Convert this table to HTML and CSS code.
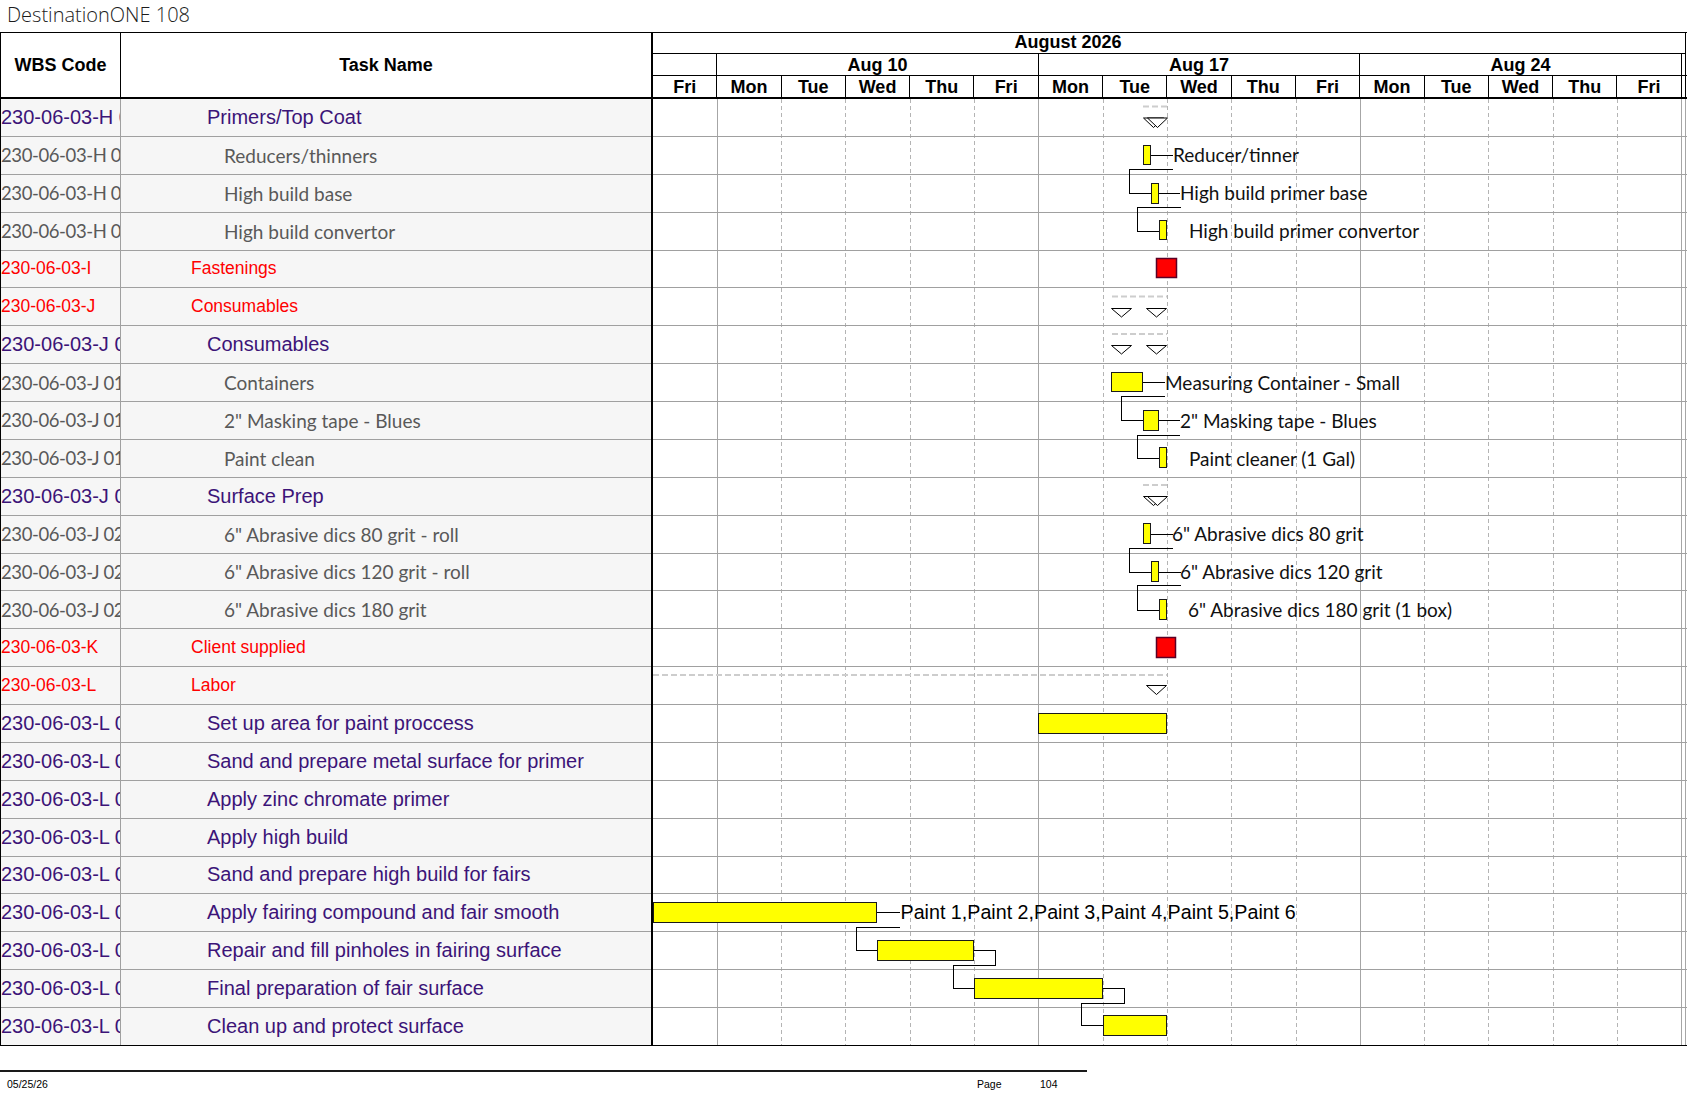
FILE: index.html
```html
<!DOCTYPE html>
<html lang="en">
<head>
<meta charset="utf-8">
<title>DestinationONE 108</title>
<link rel="stylesheet" href="styles.css">
</head>
<body>
<div class="page">
  <div class="title">DestinationONE 108</div>
  <div class="sheet">
    <div class="grid">
      <div class="grid-head">
        <div class="h-wbs">WBS Code</div>
        <div class="h-task">Task Name</div>
      </div>
      <div class="row p"><div class="wbs">230-06-03-H 02</div><div class="task">Primers/Top Coat</div></div>
      <div class="row g"><div class="wbs">230-06-03-H 02.01</div><div class="task">Reducers/thinners</div></div>
      <div class="row g"><div class="wbs">230-06-03-H 02.02</div><div class="task">High build base</div></div>
      <div class="row g"><div class="wbs">230-06-03-H 02.03</div><div class="task">High build convertor</div></div>
      <div class="row r"><div class="wbs">230-06-03-I</div><div class="task">Fastenings</div></div>
      <div class="row r"><div class="wbs">230-06-03-J</div><div class="task">Consumables</div></div>
      <div class="row p"><div class="wbs">230-06-03-J 01</div><div class="task">Consumables</div></div>
      <div class="row g"><div class="wbs">230-06-03-J 01.01</div><div class="task">Containers</div></div>
      <div class="row g"><div class="wbs">230-06-03-J 01.02</div><div class="task">2" Masking tape - Blues</div></div>
      <div class="row g"><div class="wbs">230-06-03-J 01.03</div><div class="task">Paint clean</div></div>
      <div class="row p"><div class="wbs">230-06-03-J 02</div><div class="task">Surface Prep</div></div>
      <div class="row g"><div class="wbs">230-06-03-J 02.01</div><div class="task">6" Abrasive dics 80 grit - roll</div></div>
      <div class="row g"><div class="wbs">230-06-03-J 02.02</div><div class="task">6" Abrasive dics 120 grit - roll</div></div>
      <div class="row g"><div class="wbs">230-06-03-J 02.03</div><div class="task">6" Abrasive dics 180 grit</div></div>
      <div class="row r"><div class="wbs">230-06-03-K</div><div class="task">Client supplied</div></div>
      <div class="row r"><div class="wbs">230-06-03-L</div><div class="task">Labor</div></div>
      <div class="row p"><div class="wbs">230-06-03-L 01</div><div class="task">Set up area for paint proccess</div></div>
      <div class="row p"><div class="wbs">230-06-03-L 02</div><div class="task">Sand and prepare metal surface for primer</div></div>
      <div class="row p"><div class="wbs">230-06-03-L 03</div><div class="task">Apply zinc chromate primer</div></div>
      <div class="row p"><div class="wbs">230-06-03-L 04</div><div class="task">Apply high build</div></div>
      <div class="row p"><div class="wbs">230-06-03-L 05</div><div class="task">Sand and prepare high build for fairs</div></div>
      <div class="row p"><div class="wbs">230-06-03-L 06</div><div class="task">Apply fairing compound and fair smooth</div></div>
      <div class="row p"><div class="wbs">230-06-03-L 07</div><div class="task">Repair and fill pinholes in fairing surface</div></div>
      <div class="row p"><div class="wbs">230-06-03-L 08</div><div class="task">Final preparation of fair surface</div></div>
      <div class="row p"><div class="wbs">230-06-03-L 09</div><div class="task">Clean up and protect surface</div></div>
    </div>
    <div class="chart">
      <div class="thead">
        <div class="t-month">August 2026</div>
        <div class="t-weeks">
          <div class="tc d"></div>
          <div class="tc w">Aug 10</div>
          <div class="tc w">Aug 17</div>
          <div class="tc w">Aug 24</div>
          <div class="tc rest"></div>
        </div>
        <div class="t-days">
          <div class="tc d">Fri</div>
          <div class="tc d">Mon</div>
          <div class="tc d">Tue</div>
          <div class="tc d">Wed</div>
          <div class="tc d">Thu</div>
          <div class="tc d">Fri</div>
          <div class="tc d">Mon</div>
          <div class="tc d">Tue</div>
          <div class="tc d">Wed</div>
          <div class="tc d">Thu</div>
          <div class="tc d">Fri</div>
          <div class="tc d">Mon</div>
          <div class="tc d">Tue</div>
          <div class="tc d">Wed</div>
          <div class="tc d">Thu</div>
          <div class="tc d">Fri</div>
          <div class="tc rest"></div>
        </div>
      </div>
      <svg class="tbody" width="1034" height="947" viewBox="0 0 1034 947" xmlns="http://www.w3.org/2000/svg">
        <g class="vdash">
          <line x1="128.5" y1="0" x2="128.5" y2="947"/>
          <line x1="192.5" y1="0" x2="192.5" y2="947"/>
          <line x1="257.5" y1="0" x2="257.5" y2="947"/>
          <line x1="321.5" y1="0" x2="321.5" y2="947"/>
          <line x1="450.5" y1="0" x2="450.5" y2="947"/>
          <line x1="514.5" y1="0" x2="514.5" y2="947"/>
          <line x1="578.5" y1="0" x2="578.5" y2="947"/>
          <line x1="643.5" y1="0" x2="643.5" y2="947"/>
          <line x1="771.5" y1="0" x2="771.5" y2="947"/>
          <line x1="835.5" y1="0" x2="835.5" y2="947"/>
          <line x1="900.5" y1="0" x2="900.5" y2="947"/>
          <line x1="964.5" y1="0" x2="964.5" y2="947"/>
        </g>
        <g class="vsolid">
          <line x1="64.5" y1="0" x2="64.5" y2="947"/>
          <line x1="385.5" y1="0" x2="385.5" y2="947"/>
          <line x1="707.5" y1="0" x2="707.5" y2="947"/>
          <line x1="1028.5" y1="0" x2="1028.5" y2="947"/>
          <line x1="1032.5" y1="0" x2="1032.5" y2="947"/>
        </g>
        <g class="hline">
          <line x1="0" y1="37.5" x2="1034" y2="37.5"/>
          <line x1="0" y1="75.5" x2="1034" y2="75.5"/>
          <line x1="0" y1="113.5" x2="1034" y2="113.5"/>
          <line x1="0" y1="151.5" x2="1034" y2="151.5"/>
          <line x1="0" y1="188.5" x2="1034" y2="188.5"/>
          <line x1="0" y1="226.5" x2="1034" y2="226.5"/>
          <line x1="0" y1="264.5" x2="1034" y2="264.5"/>
          <line x1="0" y1="302.5" x2="1034" y2="302.5"/>
          <line x1="0" y1="340.5" x2="1034" y2="340.5"/>
          <line x1="0" y1="378.5" x2="1034" y2="378.5"/>
          <line x1="0" y1="416.5" x2="1034" y2="416.5"/>
          <line x1="0" y1="454.5" x2="1034" y2="454.5"/>
          <line x1="0" y1="491.5" x2="1034" y2="491.5"/>
          <line x1="0" y1="529.5" x2="1034" y2="529.5"/>
          <line x1="0" y1="567.5" x2="1034" y2="567.5"/>
          <line x1="0" y1="605.5" x2="1034" y2="605.5"/>
          <line x1="0" y1="643.5" x2="1034" y2="643.5"/>
          <line x1="0" y1="681.5" x2="1034" y2="681.5"/>
          <line x1="0" y1="719.5" x2="1034" y2="719.5"/>
          <line x1="0" y1="757.5" x2="1034" y2="757.5"/>
          <line x1="0" y1="794.5" x2="1034" y2="794.5"/>
          <line x1="0" y1="832.5" x2="1034" y2="832.5"/>
          <line x1="0" y1="870.5" x2="1034" y2="870.5"/>
          <line x1="0" y1="908.5" x2="1034" y2="908.5"/>
        </g>
        <line class="hbottom" x1="0" y1="946.5" x2="1034" y2="946.5"/>

        <g class="sumline">
          <line x1="490" y1="7.5" x2="514" y2="7.5"/>
          <line x1="459" y1="197.5" x2="514" y2="197.5"/>
          <line x1="459" y1="235" x2="514" y2="235"/>
          <line x1="490" y1="386" x2="514" y2="386"/>
          <line x1="0" y1="576" x2="514" y2="576"/>
        </g>
        <g class="tri">
          <polygon points="490.5,19 510.5,19 500.5,28.5"/>
          <polygon points="494.5,19 514.5,19 504.5,28.5"/>
          <polygon points="458.5,209.5 478.5,209.5 468.5,218"/>
          <polygon points="493.5,209.5 513.5,209.5 503.5,218"/>
          <polygon points="458.5,246.5 478.5,246.5 468.5,255"/>
          <polygon points="493.5,246.5 513.5,246.5 503.5,255"/>
          <polygon points="490.5,397.5 510.5,397.5 500.5,406.5"/>
          <polygon points="494.5,397.5 514.5,397.5 504.5,406.5"/>
          <polygon points="493.5,586.5 513.5,586.5 503.5,595.5"/>
        </g>

        <g class="link">
          <polyline points="497.5,56.5 519.5,56.5"/>
          <polyline points="519.5,70.5 476.5,70.5 476.5,94.5 498.5,94.5"/>
          <polyline points="505.5,94.5 526.5,94.5"/>
          <polyline points="527.5,108.5 484.5,108.5 484.5,132.5 506.5,132.5"/>
          <polyline points="489.5,283.5 511.5,283.5"/>
          <polyline points="511.5,297.5 468.5,297.5 468.5,321.5 490.5,321.5"/>
          <polyline points="505.5,321.5 526.5,321.5"/>
          <polyline points="526.5,336.5 484.5,336.5 484.5,359.5 506.5,359.5"/>
          <polyline points="497.5,435.5 519.5,435.5"/>
          <polyline points="519.5,449.5 476.5,449.5 476.5,473.5 498.5,473.5"/>
          <polyline points="505.5,473.5 527.5,473.5"/>
          <polyline points="527.5,486.5 484.5,486.5 484.5,511.5 506.5,511.5"/>
          <polyline points="223.5,813.5 246.5,813.5"/>
          <polyline points="246.5,828.5 203.5,828.5 203.5,851.5 224.5,851.5"/>
          <polyline points="320.5,851.5 342.5,851.5 342.5,866.5 300.5,866.5 300.5,889.5 321.5,889.5"/>
          <polyline points="449.5,889.5 471.5,889.5 471.5,904.5 428.5,904.5 428.5,926.5 450.5,926.5"/>
        </g>

        <g class="bar">
          <rect x="490.5" y="46.5" width="7" height="19"/>
          <rect x="498.5" y="84.5" width="7" height="20"/>
          <rect x="506.5" y="121.5" width="7" height="19"/>
          <rect x="458.5" y="273.5" width="31" height="19"/>
          <rect x="490.5" y="311.5" width="15" height="20"/>
          <rect x="506.5" y="348.5" width="7" height="20"/>
          <rect x="490.5" y="424.5" width="7" height="20"/>
          <rect x="498.5" y="462.5" width="7" height="20"/>
          <rect x="506.5" y="500.5" width="7" height="20"/>
          <rect x="385.5" y="614.5" width="128" height="20"/>
          <rect x="0.5" y="803.5" width="223" height="20"/>
          <rect x="224.5" y="841.5" width="96" height="20"/>
          <rect x="321.5" y="879.5" width="128" height="20"/>
          <rect x="450.5" y="916.5" width="63" height="20"/>
        </g>
        <g class="ms">
          <rect x="503.5" y="159.5" width="20" height="19"/>
          <rect x="503.5" y="538.5" width="19" height="20"/>
        </g>

        <g class="lbl">
          <text x="520" y="63">Reducer/tinner</text>
          <text x="527" y="101">High build primer base</text>
          <text x="536" y="139">High build primer convertor</text>
          <text x="512" y="291">Measuring Container - Small</text>
          <text x="527" y="329">2" Masking tape - Blues</text>
          <text x="536" y="366.5">Paint cleaner (1 Gal)</text>
          <text x="519" y="442">6" Abrasive dics 80 grit</text>
          <text x="527" y="479.5">6" Abrasive dics 120 grit</text>
          <text x="535" y="517.5">6" Abrasive dics 180 grit (1 box)</text>
        </g>
        <text class="lbl-arial" x="247.5" y="819.5">Paint 1,Paint 2,Paint 3,Paint 4,Paint 5,Paint 6</text>
      </svg>
    </div>
  </div>
  <div class="footer">
    <span>05/25/26</span><span>Page</span><span>104</span>
  </div>
</div>
</body>
</html>
```

FILE: styles.css
```css
html, body {
  margin: 0;
  padding: 0;
  background: #fff;
  overflow: hidden;
}

body {
  width: 1687px;
  height: 1097px;
  font-family: "Liberation Sans", Arial, sans-serif;
  color: #000;
}

.page {
  display: flex;
  flex-direction: column;
}

.title {
  height: 32px;
  box-sizing: border-box;
  padding-left: 7px;
  line-height: 30px;
  font-family: "Open Sans", "DejaVu Sans", sans-serif;
  font-weight: 300;
  font-size: 20px;
  color: #1c1c1c;
}

.sheet {
  display: flex;
  border-top: 1px solid #000;
}

/* ---------- left table ---------- */
.grid {
  flex: none;
  width: 651px;
  box-sizing: border-box;
  border-left: 1px solid #000;
  display: flex;
  flex-direction: column;
}

.grid-head {
  display: grid;
  grid-template-columns: 120px 1fr;
  height: 66px;
  box-sizing: border-box;
  border-bottom: 2px solid #000;
  font-weight: bold;
  font-size: 18px;
}

.h-wbs,
.h-task {
  display: flex;
  align-items: center;
  justify-content: center;
}

.h-wbs {
  border-right: 1px solid #000;
}

.row {
  display: grid;
  grid-template-columns: 120px 1fr;
  height: 37.88px;
  box-sizing: border-box;
  border-bottom: 1px solid #a0a0a0;
  background: #f6f6f6;
}

.row:last-child {
  border-bottom-color: #000;
}

.wbs,
.task {
  display: flex;
  align-items: center;
  white-space: nowrap;
  overflow: hidden;
}

.wbs {
  border-right: 1px solid #a0a0a0;
}

.p {
  color: #3c1478;
  font-size: 20px;
}

.p .task {
  padding-left: 86px;
}

.r {
  color: #f00;
  font-size: 17.5px;
}

.r .task {
  padding-left: 70px;
}

.g {
  color: #595959;
  font-family: Lato, "Open Sans", sans-serif;
  font-size: 19px;
}

.g .wbs {
  font-size: 18.5px;
  letter-spacing: -0.4px;
}

.g .task {
  padding-left: 103px;
}

/* ---------- chart ---------- */
.chart {
  flex: none;
  width: 1036px;
  box-sizing: border-box;
  border-left: 2px solid #000;
  display: flex;
  flex-direction: column;
}

.thead {
  height: 66px;
  box-sizing: border-box;
  border-bottom: 2px solid #000;
  font-weight: bold;
  font-size: 18px;
}

.t-month {
  width: 1033px;
  height: 21px;
  box-sizing: border-box;
  border-right: 1px solid #000;
  border-bottom: 1px solid #000;
  padding-right: 202px;
  text-align: center;
  line-height: 19px;
}

.t-weeks,
.t-days {
  display: flex;
  height: 22px;
  box-sizing: border-box;
}

.t-weeks {
  border-bottom: 1px solid #000;
}

.t-days {
  height: 21px;
}

.tc {
  flex: none;
  box-sizing: border-box;
  border-right: 1px solid #000;
  text-align: center;
  line-height: 22px;
}

.tc.d {
  width: 64.3px;
}

.tc.w {
  width: 321.5px;
}

.tc.rest {
  width: 4px;
}

.tbody {
  display: block;
}

.vdash line {
  stroke: #b4b4b4;
  stroke-width: 1;
  stroke-dasharray: 4 3;
  shape-rendering: crispEdges;
}

.vsolid line {
  stroke: #a6a6a6;
  stroke-width: 1;
  shape-rendering: crispEdges;
}

.hline line {
  stroke: #a0a0a0;
  stroke-width: 1;
  shape-rendering: crispEdges;
}

.hbottom {
  stroke: #000;
  stroke-width: 1;
  shape-rendering: crispEdges;
}

.sumline line {
  stroke: #cdcdcd;
  stroke-width: 2;
  stroke-dasharray: 6 3;
}

.tri polygon {
  fill: #fff;
  stroke: #000;
  stroke-width: 1;
}

.link polyline {
  fill: none;
  stroke: #000;
  stroke-width: 1;
  shape-rendering: crispEdges;
}

.bar rect {
  fill: #ffff00;
  stroke: #1a1a1a;
  stroke-width: 1;
  shape-rendering: crispEdges;
}

.ms rect {
  fill: #ff0000;
  stroke: #5a0025;
  stroke-width: 1.5;
}

.lbl text {
  font-family: Lato, "Open Sans", sans-serif;
  font-size: 19px;
  fill: #111;
}

.lbl-arial {
  font-family: "Liberation Sans", Arial, sans-serif;
  font-size: 19.7px;
  fill: #000;
}

/* ---------- footer ---------- */
.footer {
  margin-top: 24px;
  width: 1087px;
  box-sizing: border-box;
  border-top: 2px solid #1a1a1a;
  padding-left: 7px;
  display: grid;
  grid-template-columns: 970px 63px auto;
  font-size: 10.5px;
  line-height: 24px;
}
```
